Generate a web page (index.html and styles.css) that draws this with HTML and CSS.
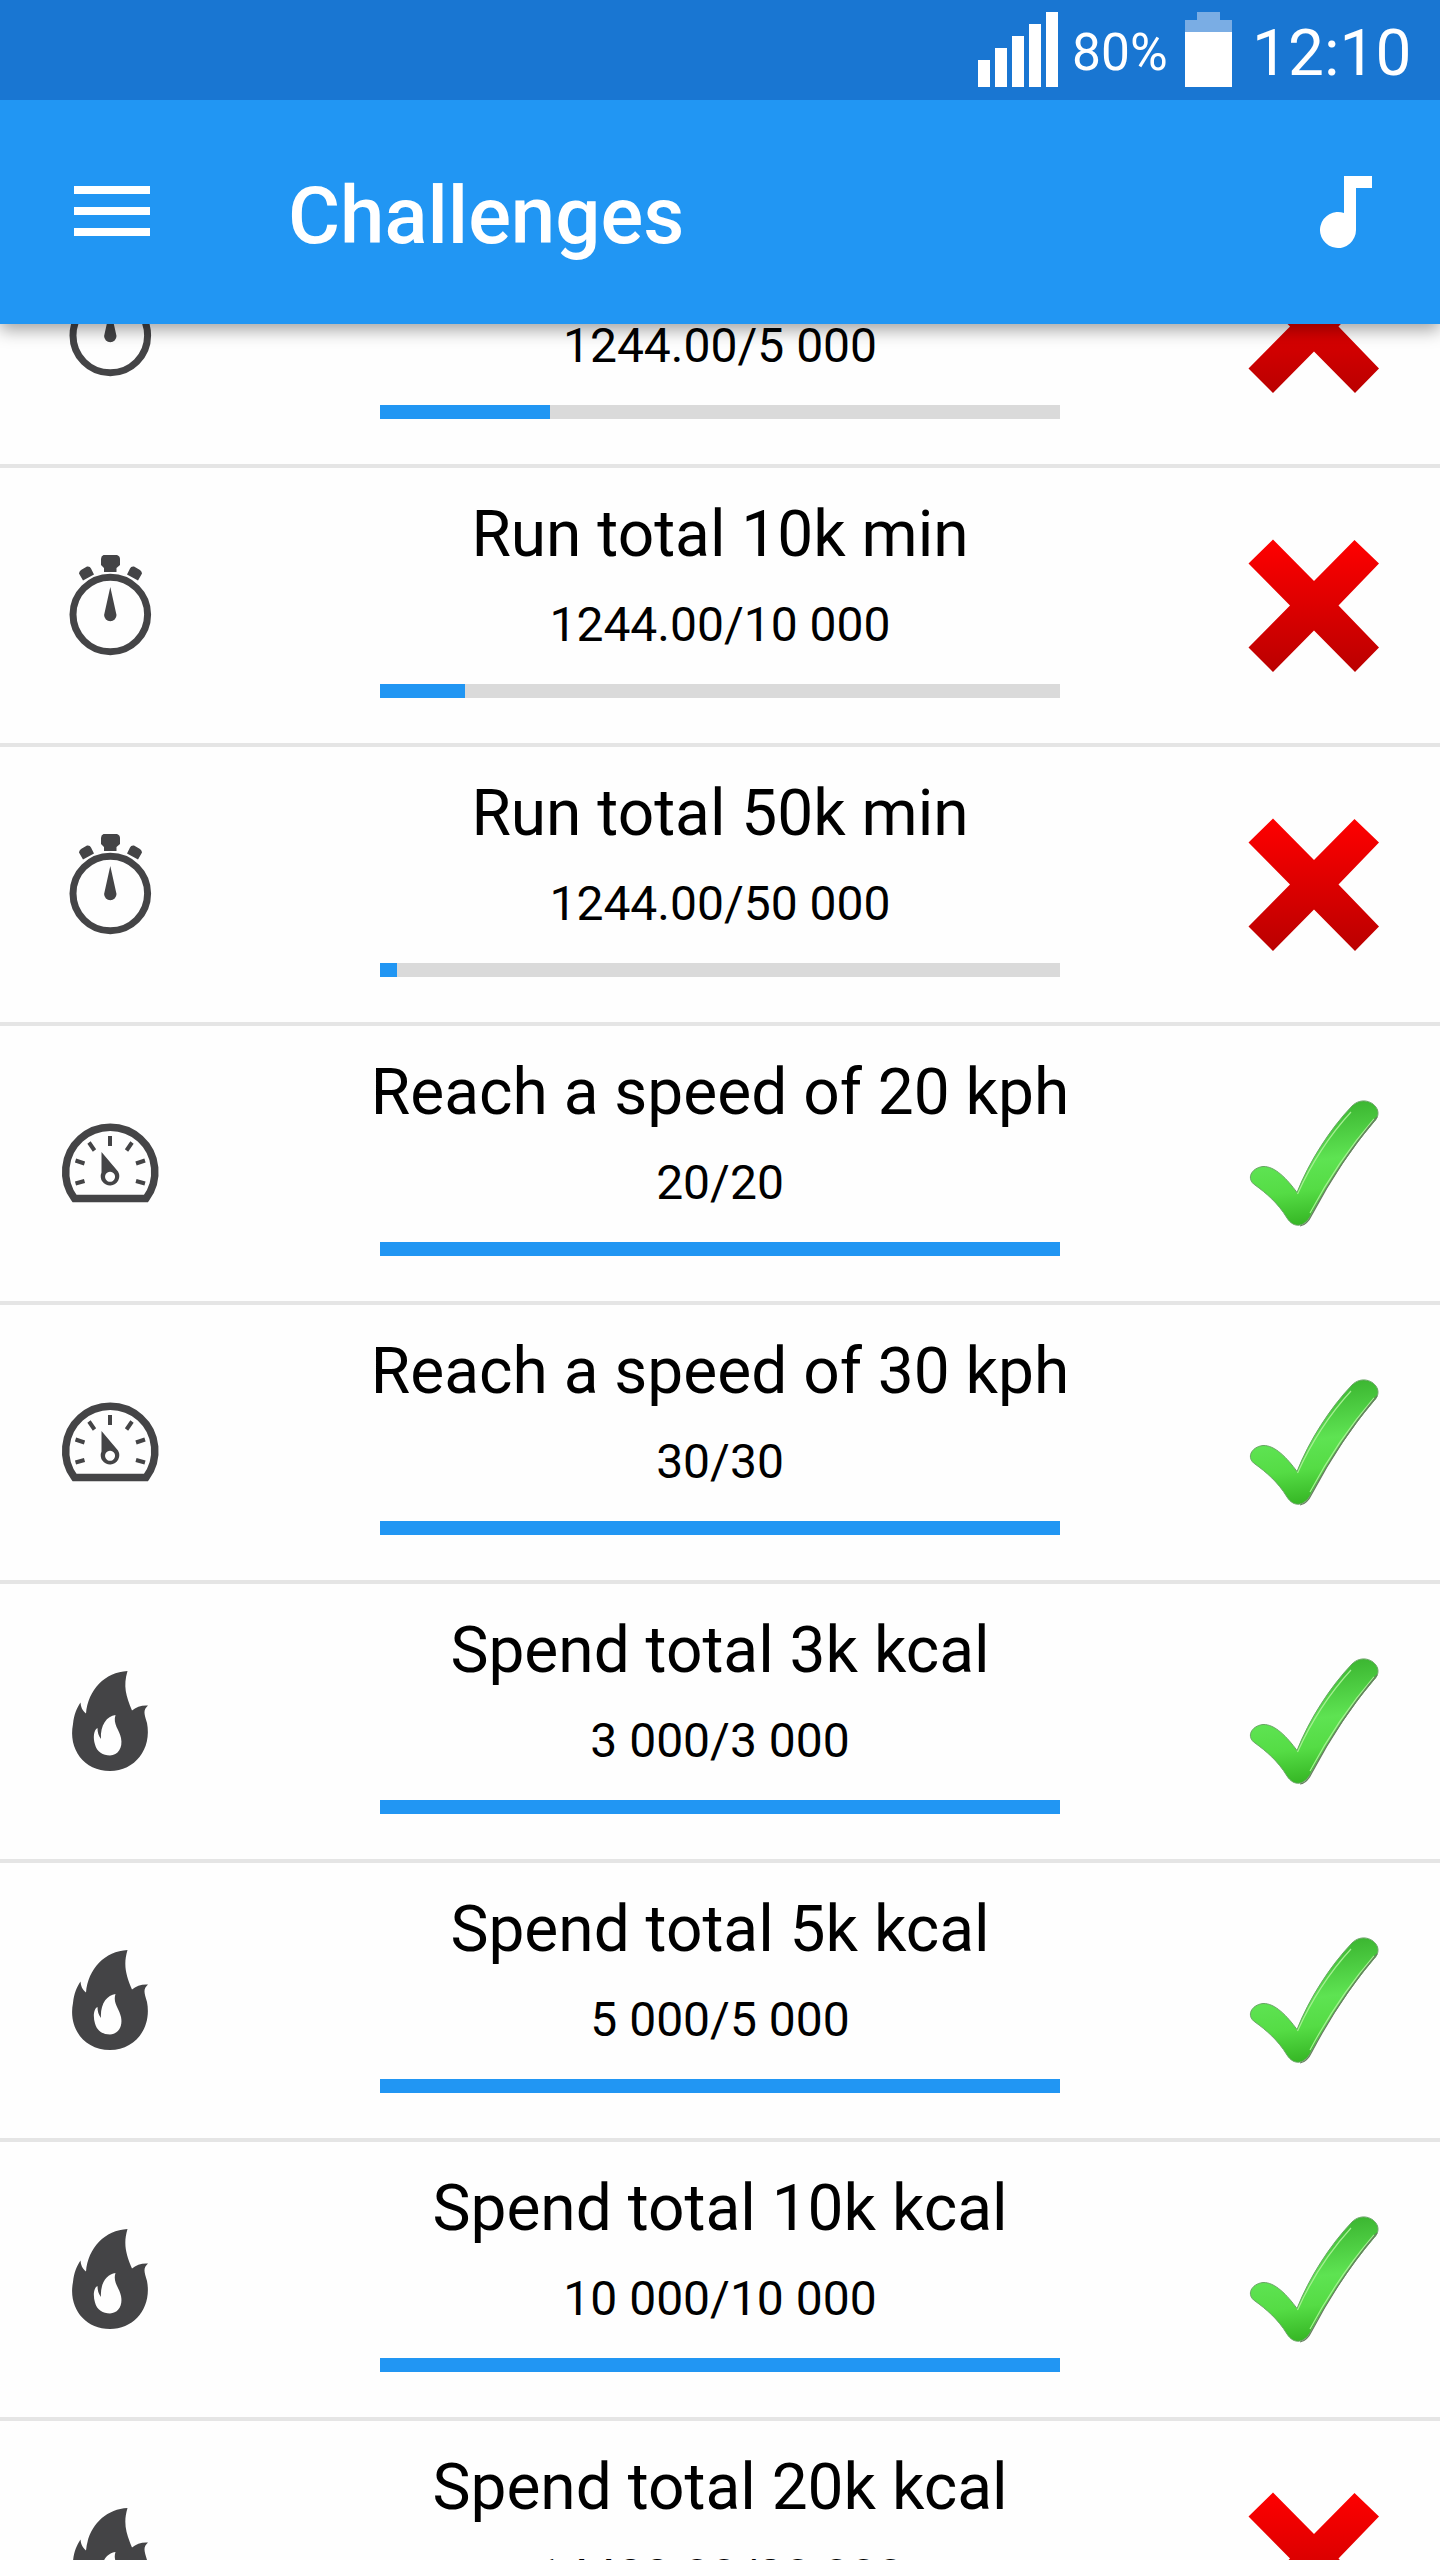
FILE: index.html
```html
<!DOCTYPE html>
<html lang="en">
<head>
<meta charset="utf-8">
<title>Challenges</title>
<link rel="stylesheet" href="styles.css">
</head>
<body>
<svg class="defs" width="0" height="0" aria-hidden="true">
  <defs>
    <linearGradient id="red" x1="0" y1="0" x2="0" y2="1">
      <stop offset="0" stop-color="#ff0000"/><stop offset="1" stop-color="#ba0000"/>
    </linearGradient>
    <linearGradient id="green" gradientUnits="userSpaceOnUse" x1="50" y1="20" x2="66" y2="148">
      <stop offset="0" stop-color="#35ad2b"/><stop offset=".5" stop-color="#5ee352"/><stop offset=".72" stop-color="#55dc45"/><stop offset="1" stop-color="#33b322"/>
    </linearGradient>
    <symbol id="timer" viewBox="0 0 140 150">
      <circle cx="70.3" cy="84.5" r="37.3" fill="none" stroke="#444446" stroke-width="7"/>
      <path fill="#444446" d="M63.5 25H77q3 1 3 4v6l-3.500 3v4H64v-4l-3-3v-6q0-3 2.500-4zM41 40l6-3.500q3-.5 4 2l3 6-11 6-4-7q0-2 2-3.500zM100 40l-6-3.500q-3-.5-4 2l-3 6 11 6 4-7q0-2-2-3.500zM70.300 57l6.200 28a6.200 6.200 0 0 1-12.400 0z"/>
    </symbol>
    <symbol id="gauge" viewBox="0 0 140 130">
      <path fill="none" stroke="#444446" stroke-width="7.500" d="M34.500 98.500A44.600 44.600 0 1 1 106 98.500z"/>
      <path fill="none" stroke="#444446" stroke-width="4" d="M70 36v10M49 42.500l5.500 8M92 42.500l-5.500 8M35.500 60.500l9 3M105 60.500l-9 3M35.500 83.500l9-2.500M105 83.500l-9-2.500"/>
      <path fill="#444446" fill-rule="evenodd" d="M61.500 52L78 71.500a9.300 9.300 0 1 1-16.500 1zM70 71.800a5 5 0 1 0 .1 0z"/>
    </symbol>
    <symbol id="flame" viewBox="0 0 140 140">
      <path fill="#444446" fill-rule="evenodd" d="M87.500 21C83 36 86 46 92 60.500C96 57 102 55 108 55.500C103 60 104 63 107 73C112 99 95 121 70 121C44 121 28 99 33 74C34 64 37 58 40.500 52.500C41 57 42 60 46 63.500C48 40 65 22 87.500 21zM75.500 65C67 66 60 75 61 89C58.500 86 57.500 82 57.500 78C53.500 80 53 88 55 94.500C57 102 63 105.500 70 105.500C78 105 83 98 81 88C79.500 80 72.500 74 75.500 65z"/>
    </symbol>
    <symbol id="cross" viewBox="0 0 170 170">
      <path fill="url(#red)" d="M43 19.500L84 61 124.500 20 149 43.500 108.500 85.500 149 127.500 125 152 84 110.500 43 152 18.500 127.500 60 85.500 18.500 43.500z"/>
    </symbol>
    <symbol id="check" viewBox="0 0 170 170">
      <path fill="url(#green)" stroke="#69a565" stroke-width="1" d="M33 86.500C45 86 57 99 67 112.500C79 82 100 49 122 26C131 17 144 21 147.500 30C149 35 147 39 143 43C120 70 97 105 81 135C75 147 64 149 57 138C48 123 36 113 25 105C16 99 21 88 33 86.500z"/>
      <path fill="none" stroke="#a5ef92" stroke-width="1.200" d="M67.500 114C82 82 99 56 121 32"/>
      <path fill="none" stroke="#a5ef92" stroke-width="1.200" d="M144 39C118 69 96 103 80 133"/>
      <path fill="none" stroke="#66815f" stroke-width="1.200" d="M147 37C119 70 98 104 82 134.500Q77 145 70 146"/>
    </symbol>
  </defs>
</svg>
<div class="screen">
  <div class="status">
    <svg class="signal" width="80" height="76" viewBox="0 0 80 76"><path fill="#fff" d="M0 49h12v27H0zM17 37h12v39H17zM34 25h12v51H34zM51 13h12v63H51zM68 1h12v75H68z"/></svg>
    <span class="percent">80%</span>
    <svg class="battery" width="47" height="75" viewBox="0 0 47 75"><path fill="#7aade4" d="M12 0h23v8h12v12H0V8h12z"/><path fill="#fff" d="M0 20h47v55H0z"/></svg>
    <span class="clock">12:10</span>
  </div>
  <header class="appbar">
    <svg class="menu" width="76" height="50" viewBox="0 0 76 50"><path fill="#fff" d="M0 0h76v8H0zM0 21h76v8H0zM0 42h76v8H0z"/></svg>
    <h1 class="heading">Challenges</h1>
    <svg class="note" width="52" height="72" viewBox="0 0 52 72"><path fill="#fff" d="M24 0h28v12H36v42a18 18 0 1 1-12-17z"/></svg>
  </header>
  <main class="list" id="list"></main>
</div>
<script src="app.js"></script>
</body>
</html>
```
FILE: styles.css
```css
body { margin: 0; background: #fff; font-family: Roboto, sans-serif; }
.defs { display: block; height: 0; }
.screen { width: 1440px; height: 2560px; overflow: hidden; display: flex; flex-direction: column; background: #fefefe; }
.status { position: relative; z-index: 2; box-sizing: border-box; flex: none; height: 100px; display: flex; align-items: flex-start; padding: 0 0 0 978px; background: #1976d2; color: #fff; }
.signal { margin-top: 11px; }
.percent { width: 112px; margin-top: 23px; padding-left: 14px; box-sizing: border-box; font-size: 51.500px; line-height: 60px; }
.battery { margin: 12px 0 0 15px; }
.clock { margin: 16px 0 0 20px; font-size: 64px; line-height: 75px; }
.appbar { position: relative; z-index: 1; box-sizing: border-box; flex: none; height: 224px; display: flex; align-items: center; padding: 0 68px 0 74px; background: #2196f3; color: #fff; box-shadow: 0 6px 16px rgba(0, 0, 0, .36); }
.menu { margin-bottom: 2px; }
.heading { flex: 1; margin: 8px 0 0 138px; font-size: 79.800px; line-height: 94px; font-weight: 500; }
.list { flex: 1; min-height: 0; overflow: hidden; }
.row { box-sizing: border-box; height: 279px; border-bottom: 4px solid #e5e5e5; display: grid; grid-template-columns: 220px 1000px 220px; }
.row:first-child { margin-top: -135px; }
.kind { display: flex; padding-left: 40px; }
.state { display: flex; padding: 52px 0 0 10px; }
.timer { width: 140px; height: 150px; margin-top: 62px; }
.gauge { width: 140px; height: 130px; margin-top: 74px; }
.flame { width: 140px; height: 140px; margin-top: 66px; }
.mark { width: 170px; height: 170px; }
.mark.done { margin-top: 2px; }
.body { display: flex; flex-direction: column; align-items: center; color: #000; }
.title { margin-top: 29px; font-size: 64px; line-height: 76px; white-space: nowrap; }
.count { margin-top: 24px; font-size: 48px; line-height: 56px; white-space: nowrap; }
.row:last-child .count { margin-top: 23px; }
.track { width: 680px; height: 14px; margin-top: 31px; background: #dadada; }
.fill { height: 14px; background: #2196f3; }
```
FILE: app.js
```js
const rows = [
  ["timer", "", "1244.00/5 000", 25, false],
  ["timer", "Run total 10k min", "1244.00/10 000", 12.5, false],
  ["timer", "Run total 50k min", "1244.00/50 000", 2.5, false],
  ["gauge", "Reach a speed of 20 kph", "20/20", 100, true],
  ["gauge", "Reach a speed of 30 kph", "30/30", 100, true],
  ["flame", "Spend total 3k kcal", "3 000/3 000", 100, true],
  ["flame", "Spend total 5k kcal", "5 000/5 000", 100, true],
  ["flame", "Spend total 10k kcal", "10 000/10 000", 100, true],
  ["flame", "Spend total 20k kcal", "14488.00/20 000", 72, false]
];
document.getElementById("list").innerHTML = rows.map(([kind, title, count, pct, done]) => `
  <section class="row">
    <div class="kind"><svg class="${kind}"><use href="#${kind}"/></svg></div>
    <div class="body">
      <div class="title">${title || "&nbsp;"}</div>
      <div class="count">${count}</div>
      <div class="track"><div class="fill" style="width:${pct}%"></div></div>
    </div>
    <div class="state"><svg class="mark ${done ? "done" : ""}"><use href="#${done ? "check" : "cross"}"/></svg></div>
  </section>`).join("");
```
